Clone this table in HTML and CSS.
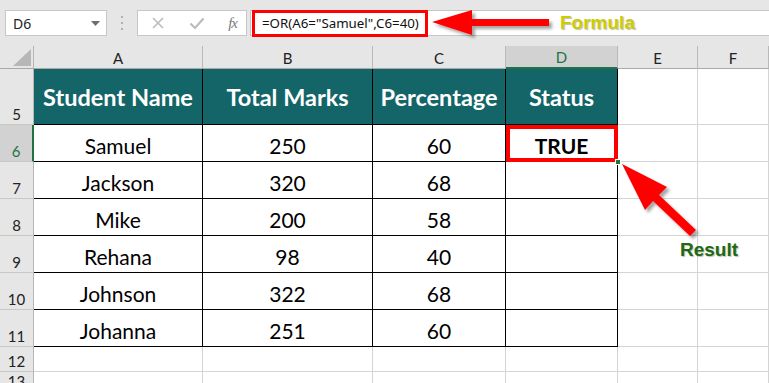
FILE: index.html
```html
<!DOCTYPE html>
<html>
<head>
<meta charset="utf-8">
<link rel="stylesheet" href="styles.css">
</head>
<body>
<div class="app">
  <div class="topbar">
    <div class="namebox"><span>D6</span>
      <svg class="caret" width="9" height="5" viewBox="0 0 9 5"><path d="M0 0H9L4.5 5Z" fill="#6d6d6d"/></svg>
    </div>
    <div class="dots">
      <svg width="4" height="14" viewBox="0 0 4 14"><rect x="1" y="0" width="2" height="2" fill="#b0b0b0"/><rect x="1" y="6" width="2" height="2" fill="#b0b0b0"/><rect x="1" y="12" width="2" height="2" fill="#b0b0b0"/></svg>
    </div>
    <div class="btns">
      <svg width="14" height="14" viewBox="0 0 14 14"><path d="M2 2L12 12M12 2L2 12" stroke="#bcbcbc" stroke-width="1.6"/></svg>
      <svg width="16" height="14" viewBox="0 0 16 14"><path d="M1.5 7.5L6 12L14.5 2.5" stroke="#bcbcbc" stroke-width="2.2" fill="none"/></svg>
      <span class="fx">fx</span>
    </div>
    <div class="fbar">
      <span class="formula">=OR(A6="Samuel",C6=40)</span>
      <span class="note note-formula">Formula</span>
    </div>
  </div>

  <div class="sheet">
    <div class="corner"><svg width="18" height="17" viewBox="0 0 18 17"><path d="M0 17H18V0Z" fill="#b7b7b7"/></svg></div>
    <div class="ch">A</div>
    <div class="ch">B</div>
    <div class="ch">C</div>
    <div class="ch ch-sel">D</div>
    <div class="ch">E</div>
    <div class="ch">F</div>

    <div class="rh">5</div>
    <div class="th">Student Name</div>
    <div class="th">Total Marks</div>
    <div class="th">Percentage</div>
    <div class="th">Status</div>
    <div class="c"></div>
    <div class="c"></div>

    <div class="rh rh-sel">6</div>
    <div class="td">Samuel</div>
    <div class="td">250</div>
    <div class="td">60</div>
    <div class="td td-true">TRUE<span class="handle"></span></div>
    <div class="c"></div>
    <div class="c"></div>

    <div class="rh">7</div>
    <div class="td">Jackson</div>
    <div class="td">320</div>
    <div class="td">68</div>
    <div class="td"></div>
    <div class="c"></div>
    <div class="c"></div>

    <div class="rh">8</div>
    <div class="td">Mike</div>
    <div class="td">200</div>
    <div class="td">58</div>
    <div class="td"></div>
    <div class="c"></div>
    <div class="c"></div>

    <div class="rh">9</div>
    <div class="td">Rehana</div>
    <div class="td">98</div>
    <div class="td">40</div>
    <div class="td"></div>
    <div class="c"></div>
    <div class="c"></div>

    <div class="rh">10</div>
    <div class="td">Johnson</div>
    <div class="td">322</div>
    <div class="td">68</div>
    <div class="td"></div>
    <div class="c"></div>
    <div class="c"></div>

    <div class="rh">11</div>
    <div class="td">Johanna</div>
    <div class="td">251</div>
    <div class="td">60</div>
    <div class="td"></div>
    <div class="c"></div>
    <div class="c"></div>

    <div class="rh">12</div>
    <div class="c"></div>
    <div class="c"></div>
    <div class="c"></div>
    <div class="c"></div>
    <div class="c"></div>
    <div class="c"></div>

    <div class="rh">13</div>
    <div class="c"></div>
    <div class="c"></div>
    <div class="c"></div>
    <div class="c"></div>
    <div class="c"></div>
    <div class="c"></div>
  </div>

  <svg class="arrows" width="769" height="383" viewBox="0 0 769 383">
    <defs>
      <filter id="sh" x="-20%" y="-20%" width="140%" height="140%">
        <feDropShadow dx="3" dy="3" stdDeviation="1.5" flood-color="#000" flood-opacity="0.35"/>
      </filter>
    </defs>
    <polygon filter="url(#sh)" fill="#ff0000" points="432,22 472,10 472,19 549,19 549,26 472,26 472,35"/>
    <polygon filter="url(#sh)" fill="#ff0000" points="622,164 667,187 659,195 696,230 690,236 653,201 645,210"/>
  </svg>
  <span class="note note-result">Result</span>
</div>
</body>
</html>
```

FILE: styles.css
```css
html, body {
  margin: 0;
  padding: 0;
  background: #ffffff;
}

.app {
  position: relative;
  width: 769px;
  height: 383px;
  overflow: hidden;
  font-family: Lato, "Noto Sans", sans-serif;
  color: #000;
}

/* ---------- formula bar ---------- */
.topbar {
  height: 46px;
  box-sizing: border-box;
  background: #e6e6e6;
  display: flex;
  align-items: flex-start;
  padding: 10px 0 0 5px;
}

.namebox {
  width: 102px;
  height: 26px;
  box-sizing: border-box;
  background: #fff;
  border: 1px solid #c6c6c6;
  display: flex;
  align-items: center;
  justify-content: space-between;
  padding: 0 6px 0 7px;
  font: 14px "Noto Sans", sans-serif;
  color: #222;
}

.dots {
  width: 30px;
  height: 26px;
  display: flex;
  align-items: center;
  justify-content: center;
}

.btns {
  width: 110px;
  height: 26px;
  box-sizing: border-box;
  background: #fff;
  border: 1px solid #c6c6c6;
  display: flex;
  align-items: center;
  justify-content: space-between;
  padding: 0 9px 0 13px;
}

.fx {
  font: italic 15px "Liberation Serif", serif;
  color: #7a7a7a;
  letter-spacing: -1px;
}

.fbar {
  flex: 1;
  height: 26px;
  box-sizing: border-box;
  margin-left: 3px;
  background: #fff;
  border: 1px solid #c6c6c6;
  border-right: none;
  display: flex;
  align-items: center;
}

.formula {
  width: 176px;
  height: 27px;
  box-sizing: border-box;
  margin-left: 1px;
  border: 3px solid #ff0000;
  padding-left: 7px;
  display: flex;
  align-items: center;
  font: 13.3px "Noto Sans", sans-serif;
  color: #111;
  white-space: nowrap;
}

.note {
  font-family: "Liberation Sans", Arial, sans-serif;
  font-weight: bold;
  font-size: 19px;
  text-shadow: 1px 1px 1px rgba(0, 0, 0, 0.25);
}

.note-formula {
  margin-left: 132px;
  color: #cccc00;
}

.note-result {
  position: absolute;
  left: 680px;
  top: 239px;
  color: #1e6a14;
}

/* ---------- sheet ---------- */
.sheet {
  display: grid;
  grid-template-columns: 34px 169px 170px 133px 112px 80px 71px;
  grid-template-rows: 23px 56px repeat(6, 37px) 25px 20px;
}

.sheet > div {
  box-sizing: border-box;
  border-right: 1px solid #d4d4d4;
  border-bottom: 1px solid #d4d4d4;
  display: flex;
  justify-content: center;
  position: relative;
}

.corner {
  background: #e6e6e6;
  border-right-color: #b5b5b5 !important;
  border-bottom-color: #a9a9a9 !important;
  align-items: flex-end;
  justify-content: flex-end !important;
  padding: 0 2px 2px 0;
}

.ch {
  background: #e6e6e6;
  border-right-color: #b9b9b9 !important;
  border-bottom-color: #a9a9a9 !important;
  align-items: center;
  font-size: 15px;
  color: #222;
  padding-top: 1px;
}

.ch-sel {
  background: #d2d2d2;
  color: #217346;
  border-bottom: 2px solid #217346 !important;
}

.rh {
  background: #e6e6e6;
  border-right-color: #b5b5b5 !important;
  border-bottom-color: #c8c8c8 !important;
  align-items: flex-end;
  font-size: 15px;
  color: #222;
  padding-bottom: 1px;
}

.rh-sel {
  background: #d2d2d2;
  color: #217346;
  border-right: 2px solid #217346 !important;
}

.th {
  background: #136568;
  color: #fff;
  border-right-color: #000 !important;
  border-bottom-color: #000 !important;
  align-items: center;
  font-weight: bold;
  font-size: 23.5px;
  padding-top: 1px;
}

.td {
  border-right-color: #000 !important;
  border-bottom-color: #000 !important;
  align-items: flex-end;
  font-size: 21px;
  padding-bottom: 3px;
}

.td-true {
  font-weight: bold;
  outline: 4px solid #ff0000;
  outline-offset: -4px;
}

.handle {
  position: absolute;
  right: -4px;
  bottom: -4px;
  width: 6px;
  height: 6px;
  background: #217346;
  border: 1px solid #fff;
  box-sizing: border-box;
  z-index: 2;
}

.arrows {
  position: absolute;
  left: 0;
  top: 0;
  pointer-events: none;
}
```
